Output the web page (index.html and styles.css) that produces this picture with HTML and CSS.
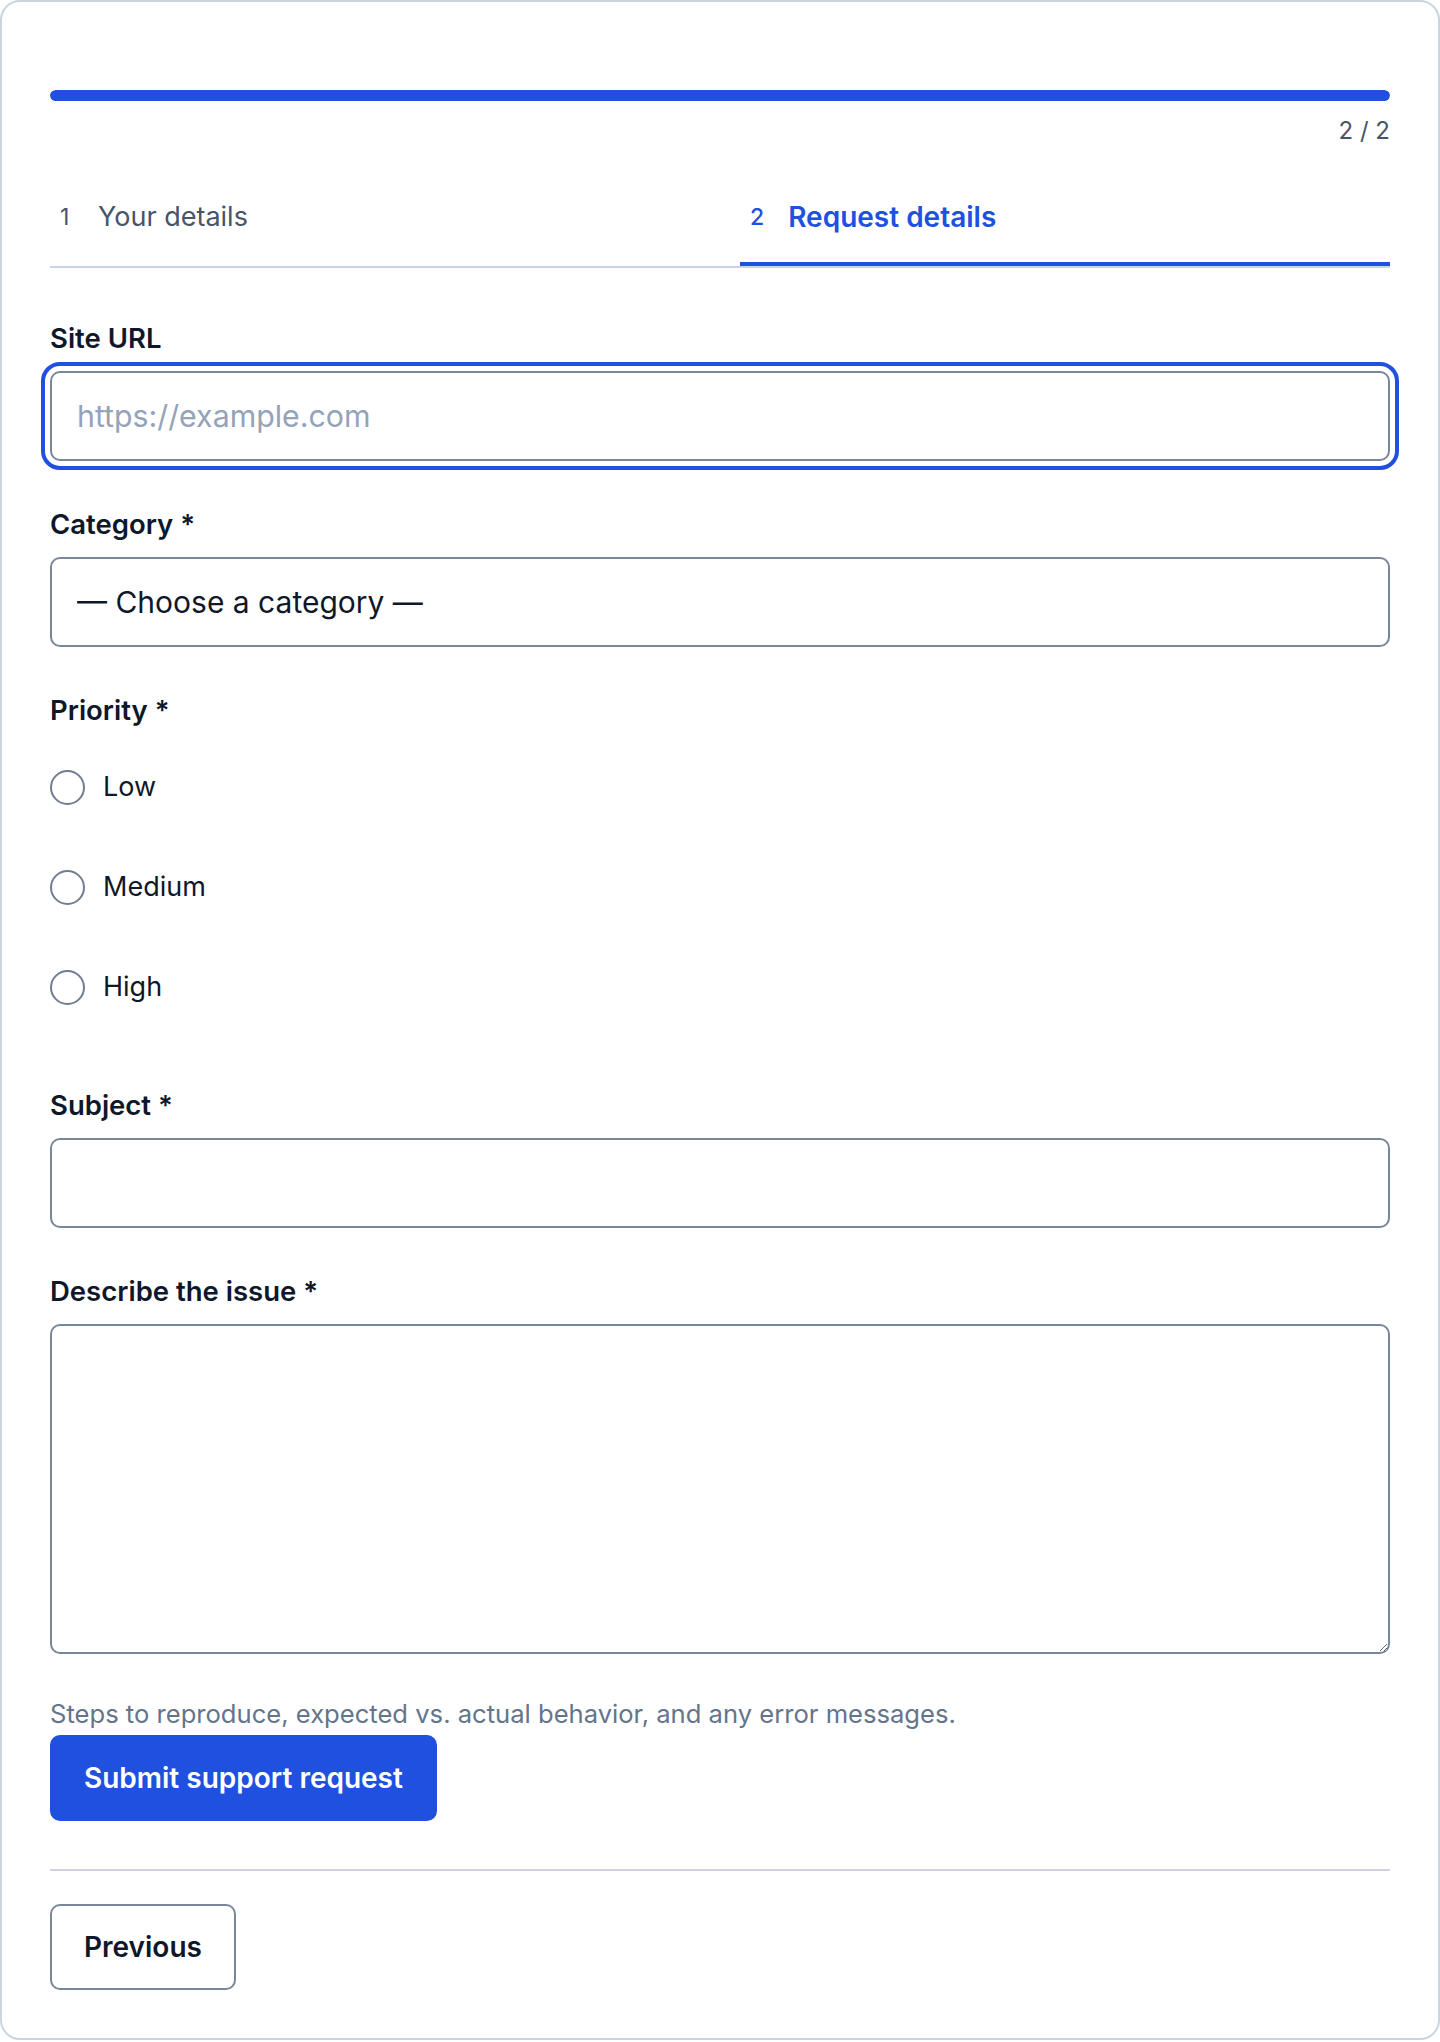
FILE: index.html
```html
<!DOCTYPE html>
<html lang="en">
<head>
<meta charset="utf-8">
<title>Support request</title>
<link rel="stylesheet" href="styles.css">
</head>
<body>
<main class="card">
  <div class="progress"><div class="progress-fill"></div></div>
  <div class="counter">2 / 2</div>
  <nav class="steps">
    <div class="step"><span class="step-num">1</span><span class="step-text">Your details</span></div>
    <div class="step step-active"><span class="step-num">2</span><span class="step-text">Request details</span></div>
  </nav>
  <form class="form">
    <div class="field field-first">
      <label class="label" for="url">Site URL</label>
      <input class="input input-focus" id="url" type="text" placeholder="https://example.com">
    </div>
    <div class="field">
      <label class="label" for="cat">Category *</label>
      <select class="input select" id="cat">
        <option>— Choose a category —</option>
      </select>
    </div>
    <div class="field">
      <div class="label">Priority *</div>
      <div class="radios">
        <label class="radio"><span class="radio-dot"></span><span>Low</span></label>
        <label class="radio"><span class="radio-dot"></span><span>Medium</span></label>
        <label class="radio"><span class="radio-dot"></span><span>High</span></label>
      </div>
    </div>
    <div class="field">
      <label class="label" for="subj">Subject *</label>
      <input class="input" id="subj" type="text">
    </div>
    <div class="field">
      <label class="label" for="desc">Describe the issue *</label>
      <textarea class="input textarea" id="desc"></textarea>
    </div>
    <p class="helper">Steps to reproduce, expected vs. actual behavior, and any error messages.</p>
    <button class="btn btn-primary" type="button">Submit support request</button>
    <hr class="divider">
    <button class="btn btn-secondary" type="button">Previous</button>
  </form>
</main>
</body>
</html>
```
FILE: styles.css
```css
* { box-sizing: border-box; }
html, body { margin: 0; padding: 0; background: #ffffff; }
body {
  font-family: Inter, "Noto Sans", "Liberation Sans", sans-serif;
  color: #0f172a;
}
.card {
  border: 2px solid #cbd5e1;
  border-radius: 20px;
  padding: 88px 48px 48px;
  background: #ffffff;
}
.progress {
  height: 11px;
  border-radius: 6px;
  background: #e2e8f0;
  overflow: hidden;
}
.progress-fill {
  height: 100%;
  width: 100%;
  background: #2050df;
  border-radius: 6px;
}
.counter {
  margin-top: 12px;
  text-align: right;
  font-size: 24px;
  line-height: 36px;
  color: #475569;
}
.steps {
  display: grid;
  grid-template-columns: 1fr 1fr;
  column-gap: 40px;
  border-bottom: 2px solid #cbd5e1;
}
.step {
  display: flex;
  align-items: center;
  gap: 24px;
  padding: 48px 10px 25px;
  border-bottom: 4px solid transparent;
  font-size: 27px;
  line-height: 40px;
  color: #475569;
}
.step-num {
  display: inline-block;
  min-width: 14px;
  font-size: 23px;
}
.step-active {
  color: #2050df;
  border-bottom-color: #2050df;
}
.step-active .step-text { font-weight: 600; font-size: 28px; }
.step-active .step-num { font-weight: 500; }
.form { display: block; }
.field { margin-top: 44px; }
.field-first { margin-top: 51px; }
.label {
  display: block;
  font-size: 27.5px;
  line-height: 38px;
  font-weight: 600;
  margin-bottom: 14px;
  color: #0f172a;
}
.input {
  display: block;
  width: 100%;
  height: 90px;
  margin: 0;
  border: 2px solid #7a879b;
  border-radius: 10px;
  padding: 0 25px;
  font-family: Inter, "Noto Sans", "Liberation Sans", sans-serif;
  font-size: 30.3px;
  color: #0f172a;
  background: #ffffff;
}
.input::placeholder { color: #94a3b8; }
.input-focus {
  outline: 4px solid #2050df;
  outline-offset: 5px;
}
.select {
  appearance: none;
  -webkit-appearance: none;
  padding-left: 25px;
  font-size: 30px;
}
.textarea {
  height: 330px;
  padding: 20px 25px;
  resize: vertical;
}
.radios {
  display: flex;
  flex-direction: column;
  gap: 60px;
  margin-top: 38px;
  padding-bottom: 35px;
}
.radio {
  display: flex;
  align-items: center;
  gap: 18px;
  font-size: 27px;
  line-height: 40px;
  color: #0f172a;
}
.radio-dot {
  width: 35px;
  height: 35px;
  border: 2px solid #717d90;
  border-radius: 50%;
  background: #ffffff;
  flex: none;
}
.helper {
  margin: 42px 0 0;
  font-size: 25.6px;
  line-height: 36px;
  color: #64748b;
}
.btn {
  display: inline-flex;
  align-items: center;
  justify-content: center;
  height: 86px;
  padding: 0 32px;
  border-radius: 10px;
  font-family: Inter, "Noto Sans", "Liberation Sans", sans-serif;
  font-size: 28px;
  font-weight: 600;
  cursor: pointer;
}
.btn-primary {
  margin-top: 3px;
  background: #2050df;
  color: #ffffff;
  border: 2px solid #2050df;
}
.btn-secondary {
  background: #ffffff;
  color: #0f172a;
  border: 2px solid #7a879b;
}
.divider {
  margin: 48px 0 33px;
  border: none;
  height: 2px;
  background: #cbd5e1;
}
```
